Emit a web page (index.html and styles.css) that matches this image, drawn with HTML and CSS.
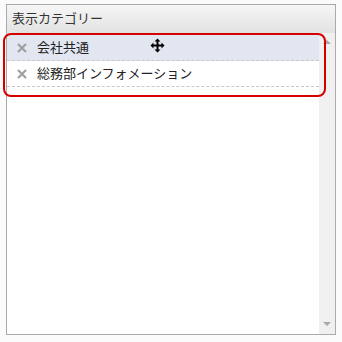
FILE: index.html
```html
<!DOCTYPE html>
<html lang="ja">
<head>
  <meta charset="UTF-8">
  <title>表示カテゴリー</title>
  <link rel="stylesheet" href="styles.css">
</head>
<body>

  <div class="panel">
    <div class="panel-head">表示カテゴリー</div>
    <div class="panel-body">
      <ul class="cat-list">
        <li class="cat-item active">
          <svg class="del" width="10" height="10" viewBox="0 0 10 10"><path d="M1 1 L9 9 M9 1 L1 9" stroke="#a0a0a0" stroke-width="2.2"/></svg>
          <span>会社共通</span>
          <svg class="move" width="15" height="15" viewBox="0 0 15 15">
            <path d="M7.5 0.5 L10.5 3.5 L8.5 3.5 L8.5 6.5 L11.5 6.5 L11.5 4.5 L14.5 7.5 L11.5 10.5 L11.5 8.5 L8.5 8.5 L8.5 11.5 L10.5 11.5 L7.5 14.5 L4.5 11.5 L6.5 11.5 L6.5 8.5 L3.5 8.5 L3.5 10.5 L0.5 7.5 L3.5 4.5 L3.5 6.5 L6.5 6.5 L6.5 3.5 L4.5 3.5 Z" fill="#000"/>
          </svg>
        </li>
        <li class="cat-item">
          <svg class="del" width="10" height="10" viewBox="0 0 10 10"><path d="M1 1 L9 9 M9 1 L1 9" stroke="#a0a0a0" stroke-width="2.2"/></svg>
          <span>総務部インフォメーション</span>
        </li>
      </ul>
      <div class="scrollbar">
        <span class="arrow up"></span>
        <span class="arrow down"></span>
      </div>
    </div>
    <!-- annotation -->
    <div class="mark"></div>
  </div>

</body>
</html>
```

FILE: styles.css
```css
body {
  margin: 0;
  padding: 0;
  background: #fbfbfb;
  font-family: "Noto Sans CJK JP", "Noto Sans", sans-serif;
  color: #333;
}

.panel {
  position: relative;
  margin: 4px 0 0 6px;
  width: 328px;
  height: 329px;
  border: 1px solid #aaa;
  background: #fff;
  display: flex;
  flex-direction: column;
}

.panel-head {
  height: 28px;
  line-height: 26px;
  padding-left: 5px;
  font-size: 13px;
  color: #333;
  background: linear-gradient(#f6f6f6, #e2e2e2);
}

.panel-body {
  flex: 1;
  display: flex;
}

.cat-list {
  flex: 1;
  list-style: none;
  margin: 0;
  padding: 2px 0 0;
}

.cat-item {
  height: 25px;
  display: flex;
  align-items: center;
  border-bottom: 1px dashed #c8c8c8;
  font-size: 13px;
  color: #222;
}

.cat-item span {
  margin-top: -2px;
}

.cat-item.active {
  background: #e1e6f1;
}

.del {
  margin: 0 10px 0 10px;
}

.move {
  margin-left: 61px;
  margin-top: -4px;
}

.scrollbar {
  width: 16px;
  background: #f0f0f0;
  display: flex;
  flex-direction: column;
  justify-content: space-between;
  align-items: center;
  padding: 7px 0 8px;
}

.arrow {
  width: 0;
  height: 0;
  border-left: 4px solid transparent;
  border-right: 4px solid transparent;
}

.arrow.up {
  border-bottom: 4px solid #a8a8a8;
}

.arrow.down {
  border-top: 4px solid #a8a8a8;
}

.mark {
  position: absolute;
  left: -4px;
  top: 28px;
  width: 319px;
  height: 60px;
  border: 2px solid #d40000;
  border-radius: 8px;
}
```
